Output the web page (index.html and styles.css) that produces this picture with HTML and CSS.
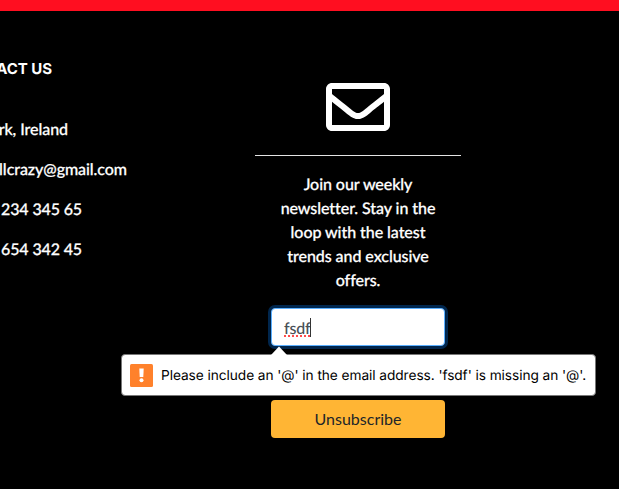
FILE: index.html
```html
<!DOCTYPE html>
<html lang="en">
<head>
<meta charset="utf-8">
<title>Newsletter</title>
<link rel="stylesheet" href="styles.css">
</head>
<body>
<footer class="footer">
  <section class="contact">
    <h2 class="contact-title">ACT US</h2>
    <ul class="contact-list">
      <li class="city">rk, Ireland</li>
      <li class="mail">llcrazy@gmail.com</li>
      <li class="phone">234 345 65</li>
      <li class="phone">654 342 45</li>
    </ul>
  </section>
  <section class="newsletter">
    <svg class="envelope" viewBox="0 64 512 384" fill="#fff"><path d="M464 64H48C21.49 64 0 85.49 0 112v288c0 26.51 21.49 48 48 48h416c26.51 0 48-21.49 48-48V112c0-26.51-21.49-48-48-48zm0 48v40.805c-22.422 18.259-58.168 46.651-134.587 106.49-16.841 13.247-50.201 45.072-73.413 44.701-23.208.375-56.579-31.459-73.413-44.701C106.18 199.465 70.425 171.067 48 152.805V112h416zM48 400V214.398c22.914 18.251 55.409 43.862 104.938 82.646 21.857 17.205 60.134 55.186 103.062 54.955 42.717.231 80.509-37.199 103.053-54.947 49.528-38.783 82.032-64.401 104.947-82.653V400H48z"/></svg>
    <hr class="rule">
    <p class="intro">Join our weekly<br>newsletter. Stay in the<br>loop with the latest<br>trends and exclusive<br>offers.</p>
    <div class="field">
      <span class="value">fsdf</span><span class="caret"></span>
      <div class="tooltip">
        <svg class="arrow" viewBox="0 0 16 9"><path d="M0 9 8 0.5 16 9z" fill="#fff"/></svg>
        <svg class="warning" viewBox="0 0 23 23"><rect width="23" height="23" rx="1.5" fill="#ff812b"/><path d="M9.3 4.5h4.4l-.4 8.5H9.7z" fill="#fff"/><circle cx="11.5" cy="16.3" r="2" fill="#fff"/></svg>
        <span class="message">Please include an '@' in the email address. 'fsdf' is missing an '@'.</span>
      </div>
    </div>
    <button class="button" type="button">Unsubscribe</button>
  </section>
</footer>
</body>
</html>
```
FILE: styles.css
```css
* { box-sizing: border-box; }
body {
  margin: 0;
  background: #000;
  color: #fff;
  font: 500 16px/24px Lato, sans-serif;
  letter-spacing: -0.06px;
  text-rendering: geometricPrecision;
  overflow: hidden;
}
.footer {
  display: flex;
  height: 489px;
  border-top: 11px solid #ff0e20;
}
.contact {
  width: 255px;
  padding-top: 46px;
  overflow: hidden;
}
.contact-title {
  margin: 0 0 37px;
  width: 52px;
  font: 650 15px/24px Inter, sans-serif;
  white-space: nowrap;
  display: flex;
  justify-content: flex-end;
}
.contact-list {
  margin: 0;
  padding: 0;
  list-style: none;
}
.contact-list li {
  display: flex;
  justify-content: flex-end;
  margin-bottom: 16px;
  white-space: nowrap;
}
.contact-list,
.intro {
  -webkit-text-stroke: 0.25px #fff;
}
.city { width: 68px; }
.mail { width: 127px; }
.contact-list .phone {
  width: 82px;
  letter-spacing: -0.14px;
}
.newsletter {
  display: flex;
  flex-direction: column;
  align-items: center;
  width: 206px;
  padding-top: 72px;
}
.envelope {
  width: 64px;
  height: 48px;
}
.rule {
  width: 206px;
  height: 1px;
  margin: 24px 0 17px;
  border: 0;
  background: #e4e4e4;
}
.intro {
  margin: 0 0 15px;
  text-align: center;
  white-space: nowrap;
}
.field {
  position: relative;
  display: flex;
  align-items: center;
  width: 174px;
  height: 38px;
  padding: 4px 12px 0;
  border: 1px solid #5aafff;
  border-radius: 4px;
  background: #fff;
  box-shadow: 0 0 0 3px #00264d;
  color: #495057;
}
.value {
  letter-spacing: -0.2px;
  text-decoration: underline dotted #ff4b4b 2px;
  text-decoration-skip-ink: none;
  text-underline-offset: 1px;
}
.caret {
  width: 1px;
  height: 19px;
  margin-top: -4px;
  background: #333;
}
.tooltip {
  position: absolute;
  top: 45px;
  left: -151px;
  display: flex;
  align-items: center;
  width: 475px;
  height: 42px;
  padding-left: 8px;
  border: 1px solid #777;
  border-radius: 4px;
  background: #fff;
  color: #000;
}
.arrow {
  position: absolute;
  top: -9px;
  left: 149px;
  width: 16px;
  height: 9px;
}
.warning {
  flex: none;
  width: 23px;
  height: 23px;
  margin-right: 8px;
}
.message {
  padding-top: 2px;
  font: 400 13.7px/20px Inter, sans-serif;
  white-space: nowrap;
}
.button {
  width: 174px;
  height: 38px;
  margin-top: 54px;
  padding: 0;
  border: 0;
  border-radius: 4px;
  background: #ffb534;
  color: #212529;
  font: 400 16px/24px Lato, sans-serif;
}
```
